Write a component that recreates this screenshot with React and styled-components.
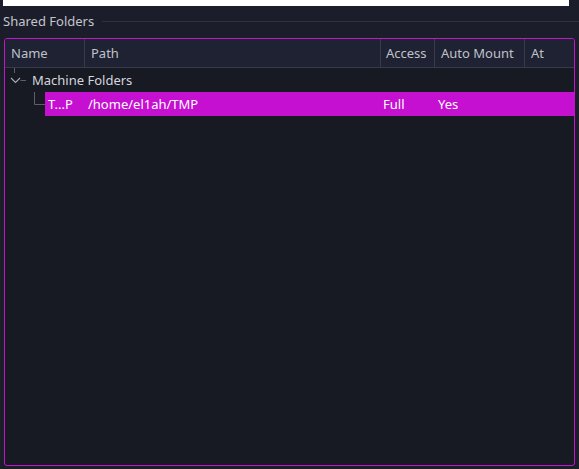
import styled, { createGlobalStyle } from 'styled-components';

const GlobalStyle = createGlobalStyle`
	html,
	body {
		margin: 0;
		padding: 0;
		background: #1b1e2a;
	}

	body {
		font-family: 'Noto Sans', 'Open Sans', sans-serif;
		font-size: 13px;
	}
`;

const COLUMNS = '80px 296px 54px 90px 1fr';

const Page = styled.div`
	width: 579px;
	height: 469px;
	background: #1b1e2a;
	display: flex;
	flex-direction: column;
	overflow: hidden;
`;

const TopField = styled.div`
	margin-left: 3px;
	width: 566px;
	height: 6px;
	background: #ffffff;
	flex-shrink: 0;
`;

const GroupTitle = styled.div`
	display: flex;
	align-items: center;
	gap: 8px;
	height: 30px;
	padding-left: 3px;
	color: #c3c5cc;

	&::after {
		content: '';
		flex: 1;
		height: 1px;
		background: #2f3242;
	}
`;

const Frame = styled.div`
	margin: 2px 4px 0 4px;
	height: 426px;
	border: 1px solid #c414cc;
	border-radius: 3px;
	background: #171923;
	display: flex;
	flex-direction: column;
	overflow: hidden;
`;

const Header = styled.div`
	display: grid;
	grid-template-columns: ${COLUMNS};
	height: 28px;
	background: #1f2233;
	border-bottom: 1px solid #383b4a;
	flex-shrink: 0;
`;

const HeaderCell = styled.div`
	display: flex;
	align-items: center;
	padding-left: ${(p) => p.$pad || 6}px;
	color: #bfc1c9;
	border-right: ${(p) => (p.$last ? 'none' : '1px solid #383b4a')};
	white-space: nowrap;
	overflow: hidden;
`;

const Row = styled.div`
	display: flex;
	height: 24px;
	align-items: stretch;
`;

const Indent = styled.div`
	width: ${(p) => p.$width}px;
	flex-shrink: 0;
	display: flex;
`;

const GroupLabel = styled.div`
	display: flex;
	align-items: center;
	padding-left: 1px;
	color: #d4d6dc;
`;

const SelectedRow = styled.div`
	flex: 1;
	display: grid;
	grid-template-columns: 40px 296px 54px 90px 1fr;
	background: #c50fd1;
	color: #ffffff;
`;

const Cell = styled.div`
	display: flex;
	align-items: center;
	padding-left: ${(p) => p.$pad || 3}px;
	white-space: nowrap;
	overflow: hidden;
`;

const BranchOpen = () => (
	<svg width="26" height="24" viewBox="0 0 26 24">
		<line x1="9.5" y1="0" x2="9.5" y2="5" stroke="#5c5f6c" />
		<polyline
			points="6,10 10.5,14.5 15,10"
			fill="none"
			stroke="#a9abb4"
			strokeWidth="1.1"
		/>
		<line x1="15.5" y1="12.5" x2="21" y2="12.5" stroke="#5c5f6c" />
	</svg>
);

const BranchLeaf = () => (
	<svg width="40" height="24" viewBox="0 0 40 24">
		<line x1="29.5" y1="0" x2="29.5" y2="12.5" stroke="#5c5f6c" />
		<line x1="29.5" y1="12.5" x2="40" y2="12.5" stroke="#5c5f6c" />
	</svg>
);

const columns = [
	{ title: 'Name', pad: 6 },
	{ title: 'Path', pad: 6 },
	{ title: 'Access', pad: 5 },
	{ title: 'Auto Mount', pad: 6 },
	{ title: 'At', pad: 6 },
];

const folders = [{ name: 'T...P', path: '/home/el1ah/TMP', access: 'Full', auto: 'Yes', at: '' }];

export default function App() {
	return (
		<>
			<GlobalStyle />
			<Page>
				<TopField />
				<GroupTitle>Shared Folders</GroupTitle>
				<Frame>
					<Header>
						{columns.map((col, i) => (
							<HeaderCell key={col.title} $pad={col.pad} $last={i === columns.length - 1}>
								{col.title}
							</HeaderCell>
						))}
					</Header>
					<Row>
						<Indent $width={26}>
							<BranchOpen />
						</Indent>
						<GroupLabel>Machine Folders</GroupLabel>
					</Row>
					{folders.map((f) => (
						<Row key={f.path}>
							<Indent $width={40}>
								<BranchLeaf />
							</Indent>
							<SelectedRow>
								<Cell $pad={3}>{f.name}</Cell>
								<Cell $pad={3}>{f.path}</Cell>
								<Cell $pad={2}>{f.access}</Cell>
								<Cell $pad={3}>{f.auto}</Cell>
								<Cell>{f.at}</Cell>
							</SelectedRow>
						</Row>
					))}
				</Frame>
			</Page>
		</>
	);
}
